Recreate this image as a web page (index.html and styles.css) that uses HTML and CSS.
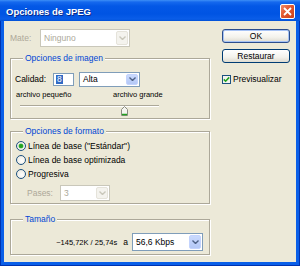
FILE: index.html
```html
<!DOCTYPE html>
<html lang="es">
<head>
<meta charset="utf-8">
<link rel="stylesheet" href="styles.css">
</head>
<body>
<div class="window">
  <div class="titlebar">
    <span class="title">Opciones de JPEG</span>
    <span class="close"><svg width="9" height="9" viewBox="0 0 9 9"><path d="M1 1 L8 8 M8 1 L1 8" stroke="#fff" stroke-width="1.8" fill="none"/></svg></span>
  </div>
  <div class="client">
    <div class="left">
      <div class="row mate">
        <span class="lbl dis mate-lbl">Mate:</span>
        <div class="select disabled mate-sel">
          <span class="val">Ninguno</span>
          <span class="arrow"><svg width="7" height="4" viewBox="0 0 7 4"><path d="M0.5 0.5 L3.5 3.5 L6.5 0.5" stroke="#c9c7ba" stroke-width="1.4" fill="none"/></svg></span>
        </div>
      </div>

      <fieldset class="grp g1">
        <legend>Opciones de imagen</legend>
        <div class="row calidad">
          <span class="lbl cal-lbl">Calidad:</span>
          <div class="input"><span class="hl">8</span></div>
          <div class="select alta-sel">
            <span class="val">Alta</span>
            <span class="arrow"><svg width="7" height="4" viewBox="0 0 7 4"><path d="M0.5 0.5 L3.5 3.5 L6.5 0.5" stroke="#4d6185" stroke-width="1.4" fill="none"/></svg></span>
          </div>
        </div>
        <div class="scale"><span>archivo pequeño</span><span>archivo grande</span></div>
        <div class="slider">
          <div class="track"></div>
          <svg class="thumb" width="7" height="10" viewBox="0 0 7 10"><path d="M0.5 3.5 L3.5 0.5 L6.5 3.5 L6.5 9.5 L0.5 9.5 Z" fill="#f5f5f0" stroke="#8a8a80" stroke-width="1"/><path d="M1 8.5 H6" stroke="#21a121" stroke-width="1.5"/></svg>
        </div>
      </fieldset>

      <fieldset class="grp g2">
        <legend>Opciones de formato</legend>
        <div class="radio on"><span class="dot"></span><span>Línea de base ("Estándar")</span></div>
        <div class="radio"><span class="dot"></span><span>Línea de base optimizada</span></div>
        <div class="radio"><span class="dot"></span><span>Progresiva</span></div>
        <div class="row pases">
          <span class="lbl dis pas-lbl">Pases:</span>
          <div class="select disabled pas-sel">
            <span class="val">3</span>
            <span class="arrow"><svg width="7" height="4" viewBox="0 0 7 4"><path d="M0.5 0.5 L3.5 3.5 L6.5 0.5" stroke="#c9c7ba" stroke-width="1.4" fill="none"/></svg></span>
          </div>
        </div>
      </fieldset>

      <fieldset class="grp g3">
        <legend>Tamaño</legend>
        <div class="row size">
          <span class="small">~145,72K / 25,74s</span>
          <span class="lbl">a</span>
          <div class="select kbps-sel">
            <span class="val">56,6 Kbps</span>
            <span class="arrow"><svg width="7" height="4" viewBox="0 0 7 4"><path d="M0.5 0.5 L3.5 3.5 L6.5 0.5" stroke="#4d6185" stroke-width="1.4" fill="none"/></svg></span>
          </div>
        </div>
      </fieldset>
    </div>

    <div class="right">
      <button class="btn default">OK</button>
      <button class="btn">Restaurar</button>
      <div class="check"><span class="box"><svg width="7" height="7" viewBox="0 0 7 7"><path d="M0.8 3.4 L2.6 5.2 L6.2 1.4" stroke="#21a121" stroke-width="1.6" fill="none"/></svg></span><span>Previsualizar</span></div>
    </div>
  </div>
</div>
</body>
</html>
```

FILE: styles.css
```css
* { box-sizing: border-box; }
html, body { margin: 0; padding: 0; background: #0a5fe8; }
body { width: 300px; height: 266px; overflow: hidden; font-family: "Liberation Sans", Arial, sans-serif; font-size: 8.5px; color: #000; }

.window {
  width: 300px; height: 266px;
  display: flex; flex-direction: column;
  background: #0a5fe8;
  border: 1px solid #0033b0; border-top: none;
  padding: 0 3px 3px;
}
.titlebar {
  height: 21px; flex: none;
  margin: 0 -4px;
  padding: 0 5px 0 6px;
  display: flex; align-items: center; justify-content: space-between;
  background: linear-gradient(#3d8ff7 0, #1669ee 2px, #0458e6 6px, #0054e3 14px, #0a5de8 19px, #0050d6 21px);
}
.title { color: #fff; font-weight: bold; font-size: 9.5px; text-shadow: 1px 1px 0 #0a2a8a; padding-top: 1px; }
.close {
  width: 15px; height: 15px; margin-top: 1px;
  border: 1px solid #fff; border-radius: 2px;
  background: linear-gradient(135deg, #f08a6a 0%, #e2572f 45%, #c8401c 100%);
  display: flex; align-items: center; justify-content: center;
}
.close svg { display: block; }

.client {
  flex: 1;
  background: #ece9d8;
  display: flex; gap: 12px;
  padding: 8px 6px 0 6px;
}
.left { width: 200px; display: flex; flex-direction: column; }
.right { width: 68px; display: flex; flex-direction: column; }

.row { display: flex; align-items: center; }
.lbl { white-space: nowrap; }
.dis { color: #aca899; }

.select {
  position: relative;
  display: flex; align-items: center;
  background: #fff;
  border: 1px solid #7f9db9;
  padding-left: 3px;
}
.select .val { flex: 1; white-space: nowrap; }
.select .arrow {
  width: 12px; align-self: stretch; margin: 1px;
  border: 1px solid #c3d3fd; border-radius: 2px;
  background: linear-gradient(#c9d9fd, #b4c8f6);
  display: flex; align-items: center; justify-content: center;
}
.select .arrow svg { display: block; }
.select.disabled { border-color: #c9c7ba; color: #aca899; }
.select.disabled .arrow { background: #f4f3ee; border-color: #e5e3da; }

.mate { height: 18px; }
.mate-lbl { width: 30px; }
.mate-sel { width: 90px; height: 18px; }

.grp {
  margin: 0; padding: 0 4px; min-width: 0;
  border: 1px solid #aca899;
  box-shadow: 1px 1px 0 #fff, inset 1px 1px 0 #fff;
}
.grp legend {
  color: #0046d5; padding: 0 2px; margin-left: 8px;
  line-height: 10px; background: #ece9d8;
}
.g1 { margin-top: 6px; height: 66px; padding-top: 9px; }
.g2 { margin-top: 7px; height: 78px; padding-top: 3px; }
.g3 { margin-top: 10px; height: 41px; padding-top: 9px; }

.calidad { height: 14px; }
.cal-lbl { width: 38px; }
.input {
  width: 21px; height: 13px;
  border: 1px solid #7f9db9; background: #fff;
  padding: 1px 0 0 2px;
  display: flex; align-items: flex-start;
}
.hl { background: #316ac5; color: #fff; line-height: 9px; padding: 0 1px; }
.alta-sel { width: 61px; height: 15px; margin-left: 5px; }

.scale {
  display: grid; grid-template-columns: 97px auto;
  font-size: 7.5px; padding-left: 1px; margin-top: 4px; line-height: 10px;
}
.slider { position: relative; width: 139px; height: 12px; margin: 1px 0 0 5px; }
.track {
  margin-top: 5px; height: 2px;
  border-top: 1px solid #aca899; border-bottom: 1px solid #fff;
}
.thumb { position: absolute; left: 101px; top: 1px; }

.radio { display: flex; align-items: center; height: 14px; gap: 2px; padding-left: 1px; }
.radio .dot {
  width: 10px; height: 10px; border-radius: 50%;
  border: 1px solid #1c5180;
  background: radial-gradient(circle at 60% 60%, #fff 0, #f0efe8 60%, #dcdad0 100%);
  display: flex; align-items: center; justify-content: center;
}
.radio.on .dot::after {
  content: ""; width: 4px; height: 4px; border-radius: 50%;
  background: #21a121; box-shadow: 0 0 0 0.5px #5fcb5f;
}
.pases { height: 16px; margin-top: 4px; padding-left: 12px; }
.pas-lbl { width: 33px; }
.pas-sel { width: 50px; height: 16px; }

.size { justify-content: flex-end; height: 18px; padding-right: 2px; }
.small { font-size: 7.5px; margin-right: 6px; }
.kbps-sel { width: 71px; height: 18px; margin-left: 4px; }

.btn {
  width: 68px; height: 14px; padding: 0;
  font: inherit; color: #000;
  border: 1px solid #003c74; border-radius: 3px;
  background: linear-gradient(#ffffff, #f3f2ec 60%, #dedbd0);
  display: flex; align-items: center; justify-content: center;
}
.btn.default { box-shadow: inset 0 0 0 1px #a7c3f5; border-color: #2b4d8c; }
.btn + .btn { margin-top: 6px; }
.check { display: flex; align-items: center; gap: 2px; margin-top: 11px; height: 10px; }
.check .box {
  width: 9px; height: 9px; border: 1px solid #1c5180; background: #f4f4ef;
  display: flex; align-items: center; justify-content: center;
}
.check .box svg { display: block; }
```
